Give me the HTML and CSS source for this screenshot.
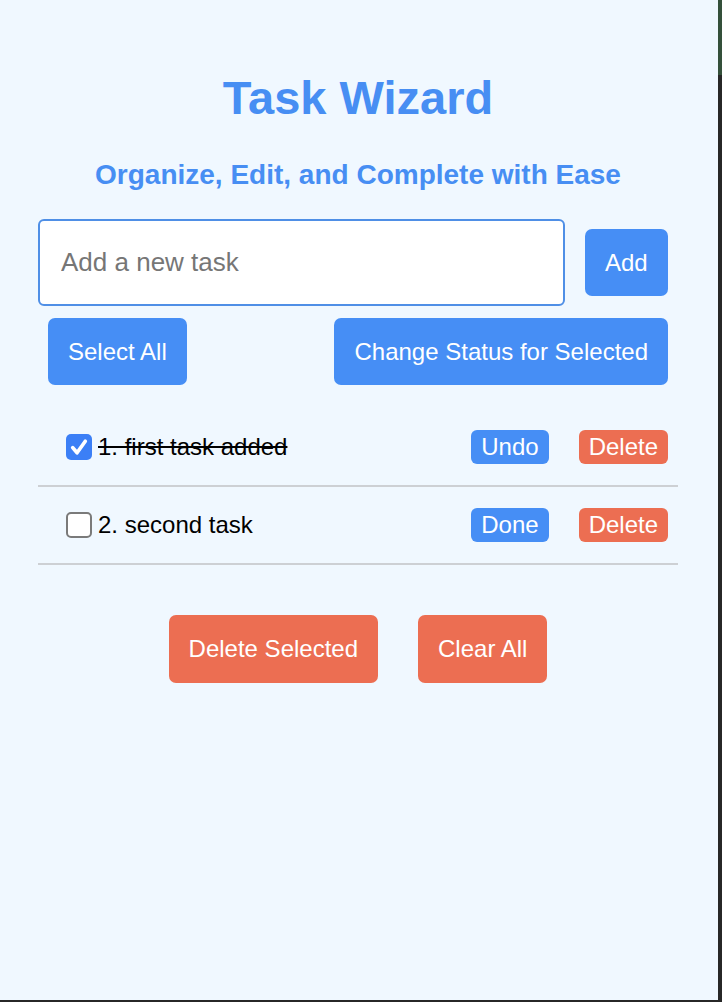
FILE: index.html
```html
<!DOCTYPE html>
<html lang="en">
<head>
<meta charset="utf-8">
<title>Task Wizard</title>
<link rel="stylesheet" href="styles.css">
</head>
<body>
<div class="page">
  <main class="app">
    <h1 class="title">Task Wizard</h1>
    <h2 class="subtitle">Organize, Edit, and Complete with Ease</h2>

    <div class="entry">
      <input class="entry-input" type="text" placeholder="Add a new task">
      <button class="btn btn-blue btn-lg">Add</button>
    </div>

    <div class="bulk">
      <button class="btn btn-blue btn-lg">Select All</button>
      <button class="btn btn-blue btn-lg">Change Status for Selected</button>
    </div>

    <ul class="tasks">
      <li class="task is-done">
        <label class="check">
          <input class="check-input" type="checkbox" checked>
          <span class="check-box">
            <svg viewBox="0 0 24 24" width="26" height="26"><path d="M6.2 12.6l4 4.7 7.6-10.6" fill="none" stroke="#fff" stroke-width="3.4" stroke-linecap="round" stroke-linejoin="round"/></svg>
          </span>
        </label>
        <span class="task-text">1. first task added</span>
        <button class="btn btn-blue btn-sm">Undo</button>
        <button class="btn btn-red btn-sm">Delete</button>
      </li>
      <li class="task">
        <label class="check">
          <input class="check-input" type="checkbox">
          <span class="check-box"></span>
        </label>
        <span class="task-text">2. second task</span>
        <button class="btn btn-blue btn-sm">Done</button>
        <button class="btn btn-red btn-sm">Delete</button>
      </li>
    </ul>

    <div class="footer-actions">
      <button class="btn btn-red btn-lg">Delete Selected</button>
      <button class="btn btn-red btn-lg">Clear All</button>
    </div>
  </main>
</div>
</body>
</html>
```

FILE: styles.css
```css
html {
  background: linear-gradient(to bottom, #34503a 0, #34503a 75px, #272727 75px);
  min-height: 100%;
}

body {
  margin: 0;
  font-family: "Liberation Sans", Arial, sans-serif;
}

.page {
  width: 718px;
  height: 1000px;
  background: #f0f8ff;
  overflow: hidden;
}

.app {
  width: 640px;
  margin-left: 38px;
  padding-top: 71px;
}

.title {
  margin: 0;
  font-size: 47px;
  line-height: 54px;
  font-weight: bold;
  text-align: center;
  color: #478ef3;
}

.subtitle {
  margin: 34px 0 0;
  font-size: 28px;
  line-height: 32px;
  font-weight: bold;
  text-align: center;
  color: #478ef3;
}

.btn {
  font-family: inherit;
  border: none;
  color: #fff;
  cursor: pointer;
  padding: 0 20px;
  font-size: 24px;
}

.btn-blue { background: #468ef5; }
.btn-red { background: #ec6e52; }

.btn-lg {
  height: 67px;
  border-radius: 7px;
}

.btn-sm {
  height: 34px;
  padding: 0 10px;
  border-radius: 6px;
}

.entry {
  margin-top: 28px;
  display: flex;
  align-items: center;
  gap: 20px;
}

.entry-input {
  box-sizing: border-box;
  width: 527px;
  height: 87px;
  border: 2px solid #4f8fe6;
  border-radius: 6px;
  background: #fff;
  padding: 0 21px;
  font-family: inherit;
  font-size: 26px;
  color: #000;
  outline: none;
}

.entry-input::placeholder {
  color: #767676;
}

.entry .btn {
  margin-right: 10px;
}

.bulk {
  margin-top: 12px;
  padding: 0 10px;
  display: flex;
  justify-content: space-between;
}

.tasks {
  list-style: none;
  margin: 24px 0 0;
  padding: 0;
}

.task {
  height: 76px;
  display: flex;
  align-items: center;
  padding: 0 10px 0 28px;
  border-bottom: 2px solid #cdd0d4;
}

.check {
  display: flex;
  margin-right: 6px;
}

.check-input {
  position: absolute;
  opacity: 0;
  width: 0;
  height: 0;
  margin: 0;
}

.check-box {
  box-sizing: border-box;
  width: 26px;
  height: 26px;
  border-radius: 5px;
  border: 2px solid #7a7a7a;
  background: #fff;
  display: flex;
  align-items: center;
  justify-content: center;
}

.check-input:checked + .check-box {
  border: none;
  background: #3b7ff6;
}

.check-box svg {
  display: block;
}

.task-text {
  flex: 1;
  font-size: 24px;
  color: #000;
}

.is-done .task-text {
  text-decoration: line-through;
}

.task .btn + .btn {
  margin-left: 30px;
}

.footer-actions {
  margin-top: 50px;
  display: flex;
  justify-content: center;
  gap: 40px;
}

.footer-actions .btn-lg {
  height: 68px;
}
```
